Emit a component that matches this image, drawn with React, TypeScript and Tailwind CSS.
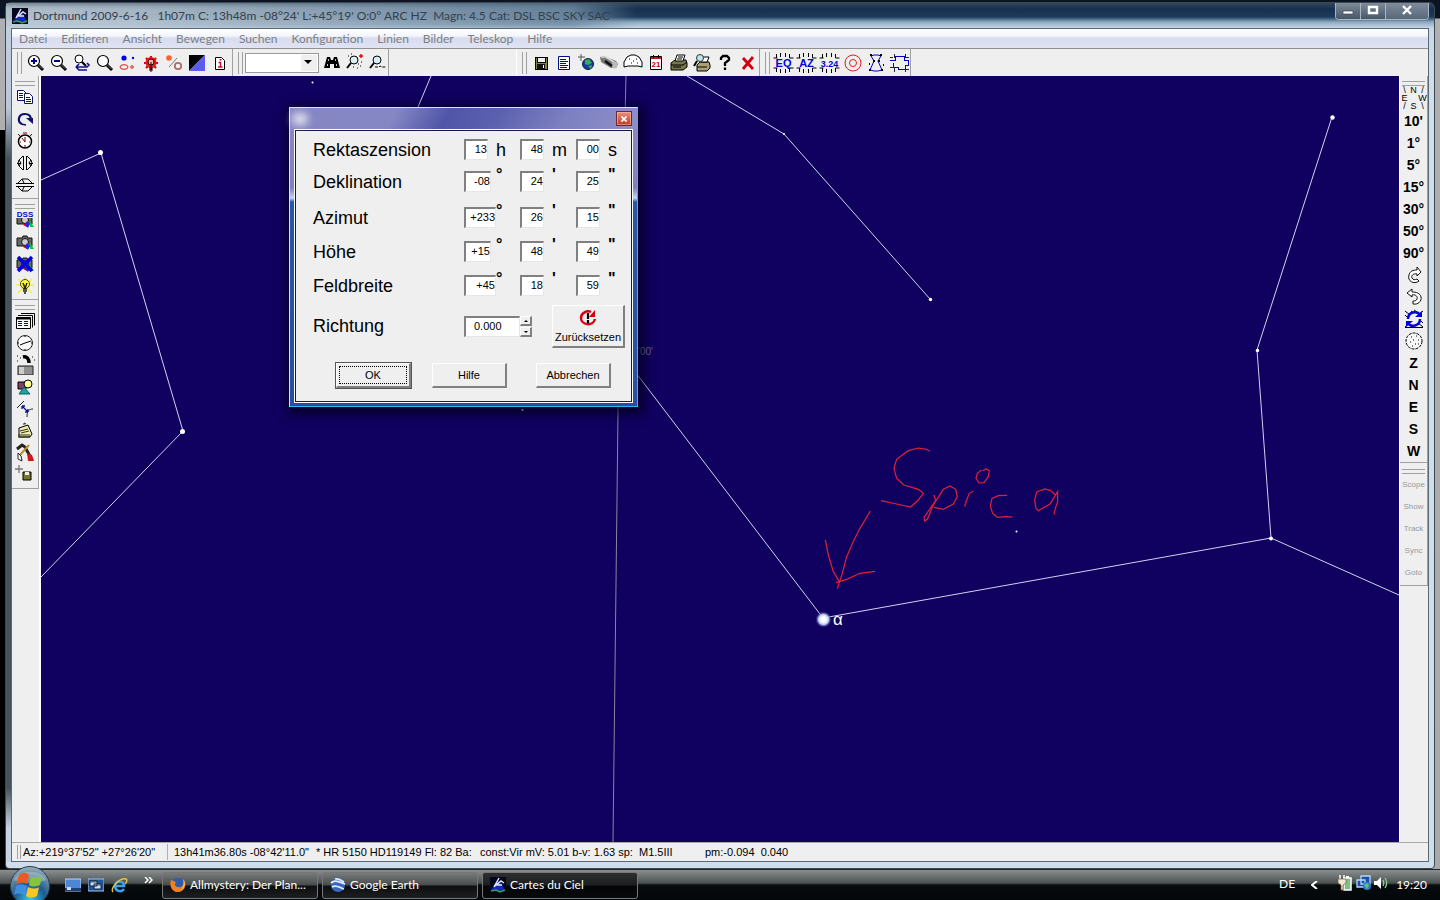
import type { ReactNode } from "react";

const ink = { fill: "none", stroke: "#000", strokeWidth: 1 } as const;

function Icon({ children, crisp = false }: { children: ReactNode; crisp?: boolean }) {
  return (
    <svg width="20" height="20" viewBox="0 0 20 20" className="shrink-0" shapeRendering={crisp ? "crispEdges" : undefined} aria-hidden="true">
      {children}
    </svg>
  );
}

function Lens({ sign }: { sign?: "plus" | "minus" }) {
  return (
    <Icon>
      <circle cx="8" cy="8" r="5.5" fill="#fff" stroke="#000" strokeWidth="1.2" />
      {sign && <path d="M5 8h6" stroke="#00008b" strokeWidth="2" />}
      {sign === "plus" && <path d="M8 5v6" stroke="#00008b" strokeWidth="2" />}
      <path d="M12 12l5 5" stroke="#000" strokeWidth="3" />
      <path d="M12.5 12l4 4" stroke="#888" strokeWidth="0.8" />
    </Icon>
  );
}

function CameraBase() {
  return (
    <>
      <path d="M2 6h5l1-2h4l1 2h4v8H2z" fill="#666" stroke="#111" />
      <circle cx="10" cy="10" r="3.5" fill="#ccc" stroke="#111" />
      <path d="M8 15l4-3v5z" fill="#d00" />
      <path d="M12 11l3 3-2 4-3-3z" fill="#22f" />
      <path d="M15 11l4 6h-4z" fill="#0c3" />
    </>
  );
}

function FrameTicks() {
  return (
    <path
      d="M3 5v-4M7 4v-4M12 4v-4M16 5v-4M3 15v4M7 16v4M12 16v4M16 15v4M0 5h4M16 5h4M0 15h4M16 15h4"
      stroke="#000"
      fill="none"
    />
  );
}

function TextBadge({ text, size }: { text: string; size: number }) {
  return (
    <svg width="21" height="20" viewBox="0 0 20 20" className="shrink-0">
      <FrameTicks />
      <text x="10" y="14" textAnchor="middle" fontSize={size} fontWeight="bold" fontFamily="Liberation Sans, sans-serif" fill="#0000d8">
        {text}
      </text>
    </svg>
  );
}

const viewTools: [string, ReactNode][] = [
  ["Vergrößern", <Lens sign="plus" />],
  ["Verkleinern", <Lens sign="minus" />],
  ["Vorherige Ansicht", (
    <Icon>
      <circle cx="7" cy="6" r="4" fill="#fff" stroke="#000" />
      <path d="M10 9l4 4" stroke="#000" strokeWidth="2.2" />
      <path d="M4 14h11l2-2-2-2M4 14l3-3M4 14l3 3h8" fill="none" stroke="#10108c" strokeWidth="1.6" />
    </Icon>
  )],
  ["Lupe", <Lens />],
  ["Sterne", (
    <Icon>
      <circle cx="6" cy="5" r="2.6" fill="#0000e0" />
      <circle cx="15" cy="5" r="1.2" fill="#0000e0" />
      <ellipse cx="6" cy="14" rx="4" ry="2.3" fill="none" stroke="#d22" />
      <circle cx="14" cy="14" r="1.3" fill="none" stroke="#d22" />
    </Icon>
  )],
  ["Nebel", (
    <Icon>
      <path d="M10 3v14M3 10h14M5 5l10 10M15 5L5 15" stroke="#d00" strokeWidth="2.2" />
      <circle cx="10" cy="9.5" r="5.5" fill="#e02020" />
      <circle cx="10" cy="9" r="3" fill="#f6b0a0" stroke="#200" />
      <path d="M10 9v10M8 15h4M8 17h4" stroke="#200" />
    </Icon>
  )],
  ["Planeten", (
    <Icon>
      <circle cx="5" cy="5" r="2.8" fill="#ff6030" />
      <circle cx="14" cy="13" r="3.2" fill="none" stroke="#a86a6a" strokeWidth="1.7" />
      <path d="M5 14L13 5" stroke="#777" />
    </Icon>
  )],
  ["Himmelsfarbe", (
    <Icon>
      <path d="M2 2h16L2 18z" fill="#000" />
      <path d="M18 2v16H2z" fill="#5c5cf4" />
    </Icon>
  )],
  ["Information", (
    <Icon>
      <path d="M5.5 4.500h6l3 3v9h-9z" fill="#fff" stroke="#000" />
      <path d="M8.500 9.500h2v4.500M8 14h4.500" stroke="#c01030" strokeWidth="1.500" fill="none" />
      <path d="M9.500 6h2v1.500h-2z" fill="#c01030" />
    </Icon>
  )],
];

const searchTools: [string, ReactNode][] = [
  ["Suchen", (
    <Icon>
      <path d="M5 4h3l1 3h2l1-3h3l3 11h-6v-4H8v4H2z" fill="#000" />
      <path d="M5 12h1M14 12h1M6 7h1M13 7h1" stroke="#fff" strokeWidth="1.5" />
    </Icon>
  )],
  ["Objekt suchen", (
    <Icon>
      <circle cx="9" cy="7" r="4" fill="#d8f0f4" stroke="#000" />
      <path d="M6 10l-4 5" stroke="#000" strokeWidth="2" />
      <path d="M14 3h4M16 1v4" stroke="#e00" strokeWidth="1.4" />
      <path d="M3 3h1M6 1h1M13 11h1M12 15h1M16 9h1M8 14h1M15 13h1" stroke="#000" />
    </Icon>
  )],
  ["Details", (
    <Icon>
      <circle cx="9" cy="7" r="4" fill="#d8f0f4" stroke="#000" />
      <path d="M6 10l-4 5" stroke="#000" strokeWidth="2" />
      <path d="M7 14h4l1-1 2 1h4" stroke="#000" fill="none" strokeDasharray="3 1" />
    </Icon>
  )],
];

const fileTools: [string, ReactNode][] = [
  ["Speichern", (
    <Icon crisp>
      <path d="M4 4h12v12H4z" fill="#85853a" stroke="#000" />
      <path d="M6 4h8v5H6z" fill="#eee" stroke="#000" />
      <path d="M6 11h8v5H6z" fill="#111" />
      <path d="M12 12h1v3h-1z" fill="#fff" />
    </Icon>
  )],
  ["Objektliste", (
    <Icon>
      <path d="M4.500 3.500h11v13h-11z" fill="#fff" stroke="#00108c" />
      <path d="M6 6.500h6M6 8.500h8M6 10.500h6M6 12.500h8M6 14.500h7" stroke="#00108c" />
    </Icon>
  )],
  ["Beobachtungsort", (
    <Icon>
      <path d="M4 1v7M1 4h7" stroke="#555" />
      <circle cx="11" cy="11" r="5.5" fill="#173aa8" stroke="#123" />
      <path d="M8 7l4-1 3 4-4 2-3-1zM11 13l4-1-1 4z" fill="#35b050" />
    </Icon>
  )],
  ["Teleskop", (
    <Icon>
      <path d="M0 4l4-1 12 5 2 3-2 4-5 0-10-6z" fill="#777" />
      <path d="M1 4l5 0 8 5" stroke="#ddd" strokeWidth="1.6" fill="none" />
      <ellipse cx="14.500" cy="12" rx="3" ry="3.500" fill="#bbb" />
      <path d="M5 8l7 5" stroke="#111" strokeWidth="2.5" />
    </Icon>
  )],
  ["Horizont", (
    <Icon>
      <path d="M1 14V9l3-5 4-2h4l4 2 3 5v5l-4-1H5z" fill="#fff" stroke="#000" />
      <path d="M6 6h1M10 8h1M13 6h1M8 10h1M14 10h1" stroke="#000" />
    </Icon>
  )],
  ["Kalender", (
    <Icon>
      <path d="M4.500 3.500h11v13h-11z" fill="#fff" stroke="#000" />
      <path d="M5 4h10v2H5z" fill="#b02020" />
      <path d="M7.500 2v3M12.500 2v3" stroke="#000" />
      <text x="10" y="14" fontSize="8" fontWeight="bold" textAnchor="middle" fill="#c00" fontFamily="Liberation Sans, sans-serif">21</text>
    </Icon>
  )],
  ["Drucken", (
    <Icon>
      <path d="M2 10l4-3h11l1 3v4l-4 3H2z" fill="#777748" stroke="#000" />
      <path d="M6 8l2-6h8l-2 6z" fill="#fff" stroke="#000" />
      <path d="M9 4h5M8 6h5M2 12h12l4-3M4 14h8" stroke="#000" fill="none" />
    </Icon>
  )],
  ["Druckvorschau", (
    <Icon>
      <path d="M5 12l3-3h9l1 3v3l-3 3H5z" fill="#aaa275" stroke="#000" />
      <path d="M9 9l2-5h6l-2 5zM5 14h10" fill="#fff" stroke="#000" />
      <circle cx="8" cy="5" r="3.5" fill="#bfe4ee" stroke="#333" />
      <path d="M5 8l-3 5" stroke="#000" strokeWidth="2" />
    </Icon>
  )],
  ["Hilfe", (
    <Icon>
      <path d="M6 7V5l2-2h4l2 2v2l-4 3v3M10 14.500v2.500" stroke="#000" strokeWidth="2.300" fill="none" />
    </Icon>
  )],
  ["Beenden", (
    <Icon>
      <path d="M5 5l10 11M15 4L5 16" stroke="#d00010" strokeWidth="2.800" />
    </Icon>
  )],
];

const gridTools: [string, ReactNode][] = [
  ["Äquatorgitter", <TextBadge text="EQ" size={11} />],
  ["Azimutgitter", <TextBadge text="AZ" size={11} />],
  ["Gitterwerte", <TextBadge text="3.24" size={9} />],
  ["Telrad", (
    <Icon>
      <circle cx="10" cy="10" r="8" fill="none" stroke="#e02020" />
      <circle cx="10" cy="10" r="3.500" fill="none" stroke="#e02020" />
    </Icon>
  )],
  ["Sternbilder", (
    <Icon>
      <path d="M5 3l3-1 4 0 3 1-3 5 4 9-4 1H8l-4-1 4-9z" fill="none" stroke="#0000c8" />
      <path d="M4 2h2M14 2h2M7 8h2M12 8h2M3 17h2M15 17h2M3 11h1M17 12h1" stroke="#000" strokeWidth="2" />
    </Icon>
  )],
  ["Sternbildgrenzen", (
    <Icon crisp>
      <path d="M1 7h5V3h9v4h4v5h-3v4H9v-2H4v-4" fill="none" stroke="#0000c8" />
      <path d="M1 4h3M5 1v4M16 1v3M16 4h4M1 14h4M5 14v5M16 16v3M16 16h4" stroke="#223" />
    </Icon>
  )],
];

const leftTools: [string, ReactNode][][] = [
  [
    ["Kopieren", (
      <Icon>
        <path d="M2.500 3.500h6l3 3v7h-9z" fill="#fff" stroke="#10106a" />
        <path d="M9.500 6.500h5l3 3v7h-8z" fill="#fff" stroke="#10106a" />
        <path d="M4 6.500h4M4 8.500h4M4 10.500h4M11 10.500h4M11 12.500h5M11 14.500h5" stroke="#10106a" />
      </Icon>
    )],
    ["Aktualisieren", (
      <Icon>
        <path d="M7 15c-5-2-4-10 3-10 4 0 6 2 6 6" fill="none" stroke="#10106a" strokeWidth="2.200" />
        <path d="M11 9h7v6z" fill="#10106a" />
        <path d="M6 15l5 1" stroke="#10106a" strokeWidth="1.500" />
      </Icon>
    )],
    ["Zeit", (
      <Icon>
        <circle cx="10" cy="10.500" r="6.500" fill="#fff" stroke="#000" strokeWidth="1.500" />
        <path d="M8 2h4M3 3l2 2M17 3l-2 2M10 11V6M10 11L7 7M10 14v2M5 11h1M14 11h1" stroke="#700" />
      </Icon>
    )],
    ["Horizontal spiegeln", (
      <Icon>
        <path d="M8.500 3v14M11.500 3v14M8 3L4 7l2 3-2 3 4 4M12 3l4 4-2 3 2 3-4 4M2 10.500h4M14 10.500h4M4 7l-1 3M4 13l-1-3M16 7l1 3M16 13l1-3" {...ink} />
      </Icon>
    )],
    ["Vertikal spiegeln", (
      <Icon>
        <path d="M3 8.500h14M3 11.500h14M3 8l4-4h6l4 4M3 12l4 4h6l4-4M7 4l2 4M7 16l2-4M1 8.500h2M17 8.500h2M1 11.500h2M17 11.500h2" {...ink} />
      </Icon>
    )],
  ],
  [
    ["DSS-Bild", (
      <Icon>
        <CameraBase />
        <rect x="0" y="0" width="20" height="8" fill="#efefef" />
        <text x="10" y="7" fontSize="8" fontWeight="bold" textAnchor="middle" fill="#0010c0" fontFamily="Liberation Sans, sans-serif">DSS</text>
      </Icon>
    )],
    ["Bild anzeigen", <Icon><CameraBase /></Icon>],
    ["Bild ausblenden", (
      <Icon>
        <CameraBase />
        <path d="M3 3l14 14M17 3L3 17" stroke="#0000e0" strokeWidth="3.500" />
      </Icon>
    )],
    ["Nachtsicht", (
      <Icon>
        <path d="M3 3l14 14M17 3L3 17M1 9h18M10 1v10" stroke="#f6ee40" strokeWidth="1.500" />
        <circle cx="10" cy="8" r="4.500" fill="#ffff30" stroke="#443" />
        <path d="M8 7l2 5 2-5M8 13h4M8 15h4M9 17h2" stroke="#221" fill="none" strokeWidth="1.500" />
      </Icon>
    )],
  ],
  [
    ["Karten", (
      <Icon>
        <path d="M6 2.500h13.500v12M3 4.500h14.500v12" fill="none" stroke="#000" />
        <path d="M1.500 6.500h14v11h-14z" fill="#fff" stroke="#000" />
        <path d="M1 7.500h14" stroke="#000" strokeWidth="2" />
        <path d="M3 10.500h4M3 12.500h4M3 14.500h4M9 10.500h4M9 12.500h4M9 14.500h4" stroke="#10108c" />
      </Icon>
    )],
    ["Uhr", (
      <Icon>
        <circle cx="10" cy="10" r="7.500" fill="#fafafa" stroke="#222" />
        <path d="M16 8l-6 2-5 2M10 3v1M10 16v1M3 10h1M16 10h1" {...ink} />
      </Icon>
    )],
    ["Animation", (
      <Icon>
        <path d="M3 11h15v9H3z" fill="#909090" stroke="#222" />
        <path d="M4 12h5v7H4z" fill="#ccc" />
        <path d="M8 2c4-1 6 2 6 6" stroke="#000" strokeWidth="3.500" fill="none" />
        <path d="M2 1h1M5 3h1M17 2h1M19 5h1M2 6h1" stroke="#000" />
      </Icon>
    )],
    ["Symbole", (
      <Icon>
        <path d="M3 5h8v7H3z" fill="#80406a" stroke="#000" />
        <circle cx="13" cy="7" r="4" fill="#ffff90" stroke="#000" />
        <path d="M9 10l6 7H4z" fill="#25a0a0" stroke="#066" />
      </Icon>
    )],
    ["Entfernung", (
      <Icon>
        <path d="M2 9l7-7M12 18c0-6 2-8 6-8" stroke="#222" fill="none" />
        <path d="M7 7l6 6M7 7h3M7 7v3M13 13h-3M13 13v-3" stroke="#10108c" strokeWidth="1.300" />
      </Icon>
    )],
    ["Notizen", (
      <Icon>
        <path d="M4 7l9-3 4 9-2 3H4z" fill="#eeeeb8" stroke="#000" />
        <path d="M3 14h12M5 10l8-2M6 12l8-2M9 4V2l2 1M3 16h12" stroke="#331" fill="none" />
      </Icon>
    )],
    ["Werkzeuge", (
      <Icon>
        <path d="M2 6l5-4 3 2 7 13" fill="none" stroke="#222" strokeWidth="3" />
        <path d="M14 2L5 12" stroke="#b89030" strokeWidth="2" />
        <path d="M3 10l3 3 1 5-4-2z" fill="#fff" stroke="#222" />
        <path d="M12 10l5 2 2 6h-6z" fill="#d01818" />
      </Icon>
    )],
    ["Ansicht sichern", (
      <Icon>
        <path d="M4 0v8M0 4h8" stroke="#777" strokeWidth="1.300" />
        <path d="M8 7h8v8H8z" fill="#77772c" stroke="#000" />
        <path d="M10 7h4v3h-4z" fill="#eee" />
      </Icon>
    )],
  ],
];

const turnRight = (
  <Icon>
    <path d="M13 2l4 5-4 4V9c-4-1-6 2-5 4 1 2 3 2 5 1l2 2c-5 4-12 0-10-6 1-4 4-5 8-5z" fill="#fff" stroke="#111" />
  </Icon>
);
const turnLeft = (
  <Icon>
    <path d="M8 2L3 6l5 4V8c4-1 6 2 5 4-1 2-2 2-4 2v3c5 1 9-3 8-7-1-4-5-5-9-5z" fill="#fff" stroke="#111" />
  </Icon>
);
const turnView = (
  <Icon>
    <path d="M1 2l5 4M19 2l-5 4M1 18l5-4M19 18l-5-4M1 6l3 3M19 14l-3-3M1 18.500h18M7 2l3 2M10 1l3 2" stroke="#001" />
    <path d="M4 10c0-7 9-9 12-4M16 10c0 7-9 9-12 4" fill="none" stroke="#0000e0" strokeWidth="2.500" />
    <path d="M11 8h7V2zM9 12H2v6z" fill="#0000e0" />
  </Icon>
);
const wholeSky = (
  <Icon>
    <circle cx="10" cy="10" r="8" fill="#f8f8f8" stroke="#000" strokeDasharray="3 1" />
    <path d="M7 6h1M12 5h1M9 9h1M14 9h1M6 11h1M11 13h1M8 15h1M14 13h1" stroke="#000" />
  </Icon>
);

const fieldTools: [string, ReactNode][] = [
  ["10 Minuten", "10'"], ["1 Grad", "1°"], ["5 Grad", "5°"], ["15 Grad", "15°"], ["30 Grad", "30°"], ["50 Grad", "50°"], ["90 Grad", "90°"],
  ["Rechts drehen", turnRight], ["Links drehen", turnLeft], ["Ansicht drehen", turnView], ["Ganzer Himmel", wholeSky],
  ["Zenit", "Z"], ["Norden", "N"], ["Osten", "E"], ["Süden", "S"], ["Westen", "W"],
];

function Grip() {
  return <span className="mr-[2px] ml-[5px] h-[22px] w-[5px] shrink-0 border-x border-[#a0a0a0]" />;
}

function HGrip() {
  return <span className="mx-[2px] mt-[5px] h-[5px] shrink-0 border-y border-[#a0a0a0]" />;
}

function Tools({ items }: { items: [string, ReactNode][] }) {
  return (
    <>
      {items.map(([name, icon]) => (
        <button key={name} type="button" aria-label={name} className="flex h-[22px] w-[23px] shrink-0 items-center justify-center">
          {icon}
        </button>
      ))}
    </>
  );
}

function Atlas() {
  return (
    <svg width="16" height="16" viewBox="0 0 16 16" className="shrink-0" aria-hidden="true">
      <rect width="16" height="16" fill="#05061c" />
      <path d="M1 13l4-5 3-4 4 3 3 7-5 1z" fill="#1528b8" />
      <path d="M4 10L9 1M5 9l6-5 3 2M7 8l5 0" stroke="#dfe6ff" strokeWidth="1.500" fill="none" />
      <path d="M1 14l5-1 4 2 5-2" stroke="#35a052" strokeWidth="1.500" fill="none" />
    </svg>
  );
}

const menu = ["Datei", "Editieren", "Ansicht", "Bewegen", "Suchen", "Konfiguration", "Linien", "Bilder", "Teleskop", "Hilfe"];

function Sky() {
  return (
    <svg className="absolute inset-0 h-full w-full" viewBox="41 76 1358 766" preserveAspectRatio="none" role="img" aria-label="Sternkarte mit Spica">
      <defs>
        <radialGradient id="glow">
          <stop offset="0.300" stopColor="#fff" />
          <stop offset="0.600" stopColor="#b9cdf5" />
          <stop offset="1" stopColor="#100060" stopOpacity="0" />
        </radialGradient>
      </defs>
      <g fill="none" stroke="#d4d0ee" strokeWidth="1">
        <path d="M41 180L101 153L183 431L41 577" />
        <path d="M431 76L400 150" />
        <path d="M687 76L784 134L930 299" />
        <path d="M1332 117L1257 350L1271 538L1399 595" />
        <path d="M1271 538L823 618L620 352" />
      </g>
      <path d="M626 76L618 412L613 842" fill="none" stroke="#8a86a0" />
      <g fill="#fff">
        <circle cx="100.500" cy="152.500" r="2.500" />
        <circle cx="182.500" cy="431.500" r="2.500" />
        <circle cx="1332.500" cy="117.500" r="2.200" />
        <circle cx="1257.500" cy="350.500" r="1.800" />
        <circle cx="1271" cy="538.500" r="2" />
        <circle cx="930.500" cy="299.500" r="1.700" />
        <circle cx="784" cy="134" r="1" />
        <circle cx="312.500" cy="82.500" r="1" />
        <circle cx="522.500" cy="410" r="1" />
        <circle cx="1016.500" cy="531.500" r="1" />
      </g>
      <circle cx="823.500" cy="619.500" r="8.500" fill="url(#glow)" />
      <text x="638" y="355" fontSize="10" fill="#6c688c" fontFamily="Liberation Sans, sans-serif">'00'</text>
      <text x="833" y="625" fontSize="17" fill="#fff" fontFamily="Liberation Sans, sans-serif">α</text>
      <g transform="translate(780 430) scale(0.3333)" fill="none" stroke="#e0203c" strokeWidth="3.600">
        <polyline points="449,64 440,58 415,54 385,62 350,88 342,115 350,145 372,165 415,178 430,190 415,210 392,231 350,222 303,212" />
        <polyline points="462,195 467,212 432,262 434,273 442,268 460,225 490,178 510,168 527,178 532,200 520,222 490,238 462,232" />
        <polyline points="580,184 568,190 560,210 554,230" />
        <polyline points="605,120 592,130 588,145 597,159 612,158 625,140 628,122 618,117 608,122" />
        <polyline points="681,196 655,197 636,205 631,228 638,250 652,262 680,260 698,261" />
        <polyline points="826,195 812,182 795,177 770,186 764,210 768,235 775,242 810,222 833,185 833,215 826,235 822,254" />
        <polyline points="271,243 240,295 222,330 200,380 187,430 172,476" />
        <polyline points="136,330 145,375 160,425 178,455" />
        <polyline points="168,458 200,448 240,430 285,424" />
      </g>
    </svg>
  );
}

const sunken = "border-t-2 border-l-2 border-r border-b border-t-[#808080] border-l-[#808080] border-r-[#e6e6e6] border-b-[#e6e6e6] bg-white";
const raised = "border-t border-l border-r-2 border-b-2 border-t-white border-l-white border-r-[#808080] border-b-[#808080] bg-[#efefef]";

type Coord = { label: string; wide: string; values: [string, string, string]; time?: boolean };
const equatorial: Coord[] = [
  { label: "Rektaszension", wide: "w-6", values: ["13", "48", "00"], time: true },
  { label: "Deklination", wide: "w-[27px]", values: ["-08", "24", "25"] },
];
const horizontal: Coord[] = [
  { label: "Azimut", wide: "w-8", values: ["+233", "26", "15"] },
  { label: "Höhe", wide: "w-[27px]", values: ["+15", "48", "49"] },
  { label: "Feldbreite", wide: "w-8", values: ["+45", "18", "59"] },
];

function CoordRow({ label, wide, values, time }: Coord) {
  const units = time ? ["h", "m", "s"] : ["°", "'", "\""];
  return (
    <div className="grid h-[21px] grid-cols-[151px_56px_56px_56px]">
      <label htmlFor={label + "0"} className="text-[18px] leading-[23px]">{label}</label>
      {values.map((value, i) => (
        <div key={i} className="grid grid-cols-[32px_1fr]">
          <input
            id={label + i}
            aria-label={label + " " + units[i]}
            defaultValue={value}
            className={`h-[21px] ${i === 0 ? wide : "w-6"} ${sunken} pb-[2px] text-right text-[11px] leading-4 outline-none`}
          />
          <span className={time ? "text-[18px] leading-[23px]" : "text-[16px] leading-2 font-bold"}>{units[i]}</span>
        </div>
      ))}
    </div>
  );
}

function Dialog() {
  return (
    <form
      role="dialog"
      aria-label="Position"
      onSubmit={(e) => e.preventDefault()}
      className="absolute top-[31px] left-[248px] w-[349px] border border-[#d8e4f8] border-r-[#30b8e8] border-b-[#30b8e8] bg-[linear-gradient(180deg,#8a8ac4_0px,#7f80c0_80px,#c4d4f4_90px,#2458a8_94px,#2450a4_100%)] px-1 pb-[3px] font-['Liberation_Sans',Arial,sans-serif] text-black shadow-[2px_3px_10px_4px_rgba(0,0,20,0.7)]"
    >
      <div className="-mx-1 flex h-[21px] items-center justify-end bg-[linear-gradient(120deg,#8586c2_0%,#8587c4_30%,#5055a8_45%,#5a5fae_58%,#7c80c0_78%,#8e90c8_100%)] pr-[5px]">
        <span className="mr-auto ml-[2px] h-3 w-4 rounded-full bg-white/80 blur-[4px]" />
        <button type="button" aria-label="Schließen" className="flex h-[15px] w-4 items-center justify-center border border-[#702828] bg-linear-to-b from-[#e89080] to-[#c03820] shadow-[inset_0_0_0_1px_rgba(255,200,180,0.5)]">
          <svg width="6" height="6" viewBox="0 0 6 6"><path d="M0.500 0.500l5 5M5.500 0.500l-5 5" stroke="#fff" strokeWidth="1.600" /></svg>
        </button>
      </div>
      <div className="border border-white">
        <div className="border border-[#181840] bg-[#efefef] pt-2 pb-[13px] pl-[17px]">
          <div className="flex flex-col gap-[11px]">
            {equatorial.map((row) => <CoordRow key={row.label} {...row} />)}
          </div>
          <div className="mt-[15px] flex flex-col gap-[13px]">
            {horizontal.map((row) => <CoordRow key={row.label} {...row} />)}
          </div>
          <div className="mt-[9px] grid h-[43px] grid-cols-[151px_88px_73px] items-center">
            <label htmlFor="richtung" className="text-[18px] leading-[23px]">Richtung</label>
            <div className="flex items-center">
              <input id="richtung" defaultValue="0.000" className={`h-[21px] w-14 ${sunken} pb-[2px] pl-2 text-[11px] outline-none`} />
              <span className="flex flex-col gap-px">
                <button type="button" aria-label="Erhöhen" className={`flex h-[10px] w-3 items-center justify-center ${raised}`}>
                  <svg width="4" height="2" viewBox="0 0 4 2"><path d="M0 2l2-2 2 2z" /></svg>
                </button>
                <button type="button" aria-label="Verringern" className={`flex h-[10px] w-3 items-center justify-center ${raised}`}>
                  <svg width="4" height="2" viewBox="0 0 4 2"><path d="M0 0l2 2 2-2z" /></svg>
                </button>
              </span>
            </div>
            <button type="button" className={`flex h-[43px] w-[73px] flex-col items-center justify-center gap-[3px] text-[11px] leading-[14px] whitespace-nowrap ${raised}`}>
              <svg width="18" height="18" viewBox="0 0 18 18" className="shrink-0" aria-hidden="true">
                <path d="M12 3C8 1 2 4 2 9c0 7 12 9 14 1" fill="none" stroke="#d80010" strokeWidth="2.400" />
                <path d="M16 1v7H10z" fill="#d80010" />
                <path d="M9 4v6M9 11v3" stroke="#000" strokeWidth="2.200" />
              </svg>
              Zurücksetzen
            </button>
          </div>
          <div className="mt-[15px] flex pl-[23px] text-[11px]">
            <button type="submit" className={`h-[25px] w-[75px] p-[2px] outline outline-[#555] ${raised}`}>
              <span className="flex h-full items-center justify-center border border-dotted border-black">OK</span>
            </button>
            <button type="button" className={`ml-[21px] h-[25px] w-[75px] ${raised}`}>Hilfe</button>
            <button type="button" className={`ml-[29px] h-[25px] w-[75px] ${raised}`}>Abbrechen</button>
          </div>
        </div>
      </div>
    </form>
  );
}

function TitleBar() {
  return (
    <header className="relative flex h-[25px] shrink-0 items-center overflow-hidden pr-[5px] pl-[6px]">
      <span className="absolute inset-y-0 left-[-20px] w-[650px] bg-[linear-gradient(90deg,#c3ced8_0%,#b8c6d2_20%,#8fa5b8_60%,#6f8aa2_90%,transparent_100%)] opacity-90 blur-[3px]" />
      <span className="relative flex items-center gap-[5px]">
        <Atlas />
        <h1 className="text-[12px] whitespace-pre text-[#34414e]">Dortmund 2009-6-16   1h07m C: 13h48m -08°24' L:+45°19' O:0° ARC HZ  Magn: 4.5 Cat: DSL BSC SKY SAC</h1>
      </span>
      <span className="relative ml-auto flex h-[17px] self-start overflow-hidden rounded-b border border-t-0 border-[#a9b5c0]">
        <button type="button" aria-label="Minimieren" className="flex w-[25px] items-center justify-center border-r border-[#a9b5c0] bg-linear-to-b from-[#7e8c9a] to-[#475768]">
          <svg width="12" height="12" viewBox="0 0 12 12"><path d="M1 6h10v3H1z" fill="#fff" stroke="#445" strokeWidth="0.700" /></svg>
        </button>
        <button type="button" aria-label="Maximieren" className="flex w-[25px] items-center justify-center border-r border-[#a9b5c0] bg-linear-to-b from-[#7e8c9a] to-[#475768]">
          <svg width="12" height="12" viewBox="0 0 12 12"><path d="M2 2h8v6H2z" fill="none" stroke="#fff" strokeWidth="2.400" /></svg>
        </button>
        <button type="button" aria-label="Fenster schließen" className="flex w-[42px] items-center justify-center bg-linear-to-b from-[#7e8c9a] to-[#56687a]">
          <svg width="12" height="12" viewBox="0 0 12 12"><path d="M2 1l8 8M10 1l-8 8" stroke="#fff" strokeWidth="2.400" /></svg>
        </button>
      </span>
    </header>
  );
}

const band = "flex shrink-0 items-center border-r border-[#a0a0a0]";

function ToolBar() {
  return (
    <div className="flex h-7 shrink-0 border-t border-[#909090] bg-[#efefef]">
      <div className={`${band} w-[221px]`}>
        <Grip />
        <Tools items={viewTools} />
      </div>
      <div className={`${band} w-[156px]`}>
        <Grip />
        <select aria-label="Objekt" className="h-5 w-[74px] shrink-0 appearance-none border border-[#999] bg-white bg-[linear-gradient(#efefef,#efefef)] bg-[length:16px_16px] bg-[position:right_1px_center] bg-no-repeat">
          <option></option>
        </select>
        <svg width="10" height="5" viewBox="0 0 10 5" className="pointer-events-none mr-[6px] -ml-[15px] shrink-0" aria-hidden="true"><path d="M0 0h8L4 4z" /></svg>
        <Tools items={searchTools} />
      </div>
      <div className={`${band} ml-[127px] w-[244px] border-l border-l-white`}>
        <Grip />
        <Tools items={fileTools} />
      </div>
      <div className={`${band} w-[151px]`}>
        <Grip />
        <Tools items={gridTools} />
      </div>
    </div>
  );
}

function LeftBar() {
  return (
    <aside className="flex w-[29px] shrink-0 flex-col border-r-2 border-white bg-[#efefef]">
      {leftTools.map((group, i) => (
        <div key={i} className="flex flex-col border-r border-b border-[#a0a0a0] px-px pb-[2px]">
          <HGrip />
          {group.map(([name, icon]) => (
            <button key={name} type="button" aria-label={name} className="flex h-[22px] w-full items-center justify-center">{icon}</button>
          ))}
        </div>
      ))}
    </aside>
  );
}

function RightBar() {
  return (
    <aside className="flex w-[29px] shrink-0 flex-col border-l border-white bg-[#efefef] font-['Liberation_Sans',Arial,sans-serif]">
      <div className="flex flex-col border-r border-b border-[#a0a0a0]">
        <HGrip />
        <div className="grid h-6 grid-cols-3 text-center text-[9px] leading-2 text-black">
          <span>\</span><span>N</span><span>/</span>
          <span>E</span><span></span><span>W</span>
          <span>/</span><span>S</span><span>\</span>
        </div>
        {fieldTools.map(([name, face]) => (
          <button key={name} type="button" aria-label={name} className="flex h-[22px] items-center justify-center text-[14px] font-bold text-black">{face}</button>
        ))}
      </div>
      <div className="flex flex-col border-r border-b border-[#a0a0a0] pt-px pb-px">
        <HGrip />
        {["Scope", "Show", "Track", "Sync", "Goto"].map((name) => (
          <button key={name} type="button" className="h-[22px] text-[8px] text-[#999]">{name}</button>
        ))}
      </div>
    </aside>
  );
}

function StatusBar() {
  return (
    <footer className="flex h-[19px] shrink-0 items-center border-t border-[#a8a8a8] bg-[#efefef] font-['Liberation_Sans',Arial,sans-serif] text-[11px] whitespace-pre text-black">
      <span className="mr-[2px] ml-[5px] h-[14px] w-1 border-x border-[#a0a0a0]" />
      <span className="w-[145px] border-r border-[#b0b0b0]">Az:+219°37'52" +27°26'20"</span>
      <span className="w-[148px] pl-[6px]">13h41m36.80s -08°42'11.0"</span>
      <span className="w-[164px]">* HR 5150 HD119149 Fl: 82 Ba:</span>
      <span className="w-[225px]">const:Vir mV: 5.01 b-v: 1.63 sp:  M1.5III</span>
      <span>pm:-0.094  0.040</span>
    </footer>
  );
}

const firefox = (
  <svg width="16" height="16" viewBox="0 0 16 16" className="shrink-0">
    <circle cx="8" cy="8" r="7" fill="#2b5cb0" />
    <path d="M1 3c-2 6 1 12 7 12 7 0 9-8 6-12 0 6-3 8-6 7-3 0-4-3-2-5C4 4 3 4 1 3z" fill="#f08020" />
    <path d="M13 2c3 4 2 9-2 11 3-3 3-7 2-11z" fill="#ffd040" />
  </svg>
);
const earth = (
  <svg width="16" height="16" viewBox="0 0 16 16" className="shrink-0">
    <circle cx="8" cy="8" r="7" fill="#3a66c0" />
    <path d="M1 6c4-4 8-1 14 1M2 10c4-3 8 1 12 2M5 2c3-1 6 1 9 3" stroke="#e4edff" strokeWidth="1.800" fill="none" />
  </svg>
);

function TaskBar() {
  const tasks: [string, ReactNode, boolean][] = [
    ["Allmystery: Der Plan...", firefox, false],
    ["Google Earth", earth, false],
    ["Cartes du Ciel", <Atlas />, true],
  ];
  return (
    <nav className="relative flex h-[31px] shrink-0 items-center border-t border-[#222] bg-[linear-gradient(180deg,#8a8f90_0px,#4c5152_13px,#080b0e_15px,#04070a_100%)] text-[12px] text-white">
      <button type="button" aria-label="Start" className="relative -mt-1 ml-[9px] h-[34px] w-[42px] shrink-0">
        <svg width="42" height="42" viewBox="0 0 42 42" className="absolute top-0 left-0">
          <defs>
            <radialGradient id="orb" cx="0.500" cy="0.850" r="0.800">
              <stop offset="0" stopColor="#38c8e8" />
              <stop offset="0.500" stopColor="#1c5a90" />
              <stop offset="1" stopColor="#90a8b4" />
            </radialGradient>
          </defs>
          <circle cx="21" cy="20" r="19.500" fill="url(#orb)" stroke="#254050" />
          <path d="M5 14C9 3 33 3 37 14 30 18 12 18 5 14z" fill="#fff" opacity="0.250" />
          <path d="M10 9c4-3 7-3 10 0l-2 9c-3-2-7-2-11 0z" fill="#ee5a24" />
          <path d="M22 10c3 2 7 2 11 0l-2 9c-4 2-8 2-11 0z" fill="#86c440" />
          <path d="M7 20c4-2 7-2 11 0l-2 9c-4-2-8-2-11 0z" fill="#3f8ee0" />
          <path d="M19 21c4 2 8 2 11 0l-2 9c-4 2-8 2-11 0z" fill="#fcc624" />
        </svg>
      </button>
      <button type="button" aria-label="Desktop anzeigen" className="ml-[14px]">
        <svg width="16" height="14" viewBox="0 0 16 14"><path d="M0 1h16v12H0z" fill="#4d86d4" stroke="#bcd6f4" /><path d="M0 10h16v3H0z" fill="#1e3f78" /><path d="M2 9h4v3H2z" fill="#cde" /></svg>
      </button>
      <button type="button" aria-label="Fenster wechseln" className="ml-[7px]">
        <svg width="16" height="14" viewBox="0 0 16 14"><path d="M0 1h16v12H0z" fill="#1e55a0" stroke="#9cc4f0" /><path d="M2 3h7v5H2zM6 6h7v5H6z" fill="#cfe2fa" stroke="#123" /><path d="M2 4h7M6 7h7" stroke="#456" /></svg>
      </button>
      <button type="button" aria-label="Internet Explorer" className="ml-[7px]">
        <svg width="17" height="17" viewBox="0 0 17 17"><path d="M13 12c-3 4-9 2-9-3 0-6 9-6 9 0H4" fill="none" stroke="#3ba2ee" strokeWidth="2.600" /><path d="M2 15C-1 11 9 0 15 2c2 1 0 4-1 5" fill="none" stroke="#f2c23c" strokeWidth="1.400" /></svg>
      </button>
      <button type="button" aria-label="Weitere Symbole" className="ml-4 h-5 w-[9px] self-start">
        <svg width="9" height="7" viewBox="0 0 9 7"><path d="M1 0l3 3-3 3M5 0l3 3-3 3" fill="none" stroke="#fff" strokeWidth="1.500" /></svg>
      </button>
      <div className="ml-[9px] flex gap-1">
        {tasks.map(([name, icon, active]) => (
          <button
            key={name}
            type="button"
            className={`flex h-[27px] w-[156px] items-center gap-1 rounded-[3px] border border-[#777] pl-[7px] whitespace-nowrap ${
              active
                ? "bg-[linear-gradient(180deg,#2c2e30_0%,#1c1e20_48%,#050607_52%,#08090a_100%)]"
                : "bg-[linear-gradient(180deg,#777b7c_0%,#484c4d_48%,#0c0e10_52%,#1c1e20_100%)]"
            }`}
          >
            {icon}
            {name}
          </button>
        ))}
      </div>
      <div className="ml-auto flex items-center pr-[13px]">
        <span className="mr-4 mb-[3px]">DE</span>
        <button type="button" aria-label="Ausgeblendete Symbole" className="mr-5">
          <svg width="7" height="8" viewBox="0 0 7 8"><path d="M6 0L1 4l5 4" fill="none" stroke="#fff" strokeWidth="2" /></svg>
        </button>
        <svg width="14" height="16" viewBox="0 0 14 16" className="mr-1 mb-1" aria-hidden="true">
          <path d="M6 3h7v12H6z" fill="#7cc088" stroke="#fff" strokeWidth="1.500" /><path d="M8 1h3v2H8z" fill="#fff" />
          <path d="M2 0v4M6 0v4" stroke="#fff" strokeWidth="1.500" /><path d="M0 4h8v4l-3 2v5H3v-5L0 8z" fill="#f0e8d0" stroke="#754" strokeWidth="0.700" />
        </svg>
        <svg width="15" height="16" viewBox="0 0 15 16" className="mr-[3px] mb-1" aria-hidden="true">
          <path d="M5 1h9v8H5zM1 5h8v7H1z" fill="#1850b0" stroke="#b8d8f4" strokeWidth="1.300" />
          <circle cx="11" cy="11" r="4" fill="#2f7ad0" /><path d="M8 10l3-2 2 2-2 4z" fill="#58c860" />
        </svg>
        <svg width="14" height="14" viewBox="0 0 14 14" className="mr-2 mb-1" aria-hidden="true">
          <path d="M0 5h3l4-4v12L3 9H0z" fill="#fff" /><path d="M9 4c1 2 1 4 0 6M11 2c2 3 2 7 0 10" fill="none" stroke="#8cd090" strokeWidth="1.300" />
        </svg>
        <time>19:20</time>
      </div>
    </nav>
  );
}

export default function App() {
  return (
    <div className="flex h-screen min-h-[700px] flex-col bg-[linear-gradient(180deg,#0b1424_0px,#0b1424_18px,#b0b0b2_19px,#a8a8aa_100%)] font-[Lato,'Open_Sans',sans-serif]">
      <div className="flex min-h-0 flex-1 bg-[linear-gradient(90deg,#000_0px,#000_12px,transparent_12px)] bg-[position:0_130px] bg-no-repeat px-[5px] pt-[2px]">
        <main className="flex min-w-0 flex-1 flex-col rounded-t-md rounded-b border border-[#40484f] bg-[linear-gradient(180deg,#33475c_0px,#16304f_6px,#1d3b5b_14px,#8fa9c0_19px,#c4d6e8_25px,#cfdeec_60px,#cfdeec_100%)] pb-[6px]">
          <TitleBar />
          <div className="flex min-h-0 flex-1 bg-[linear-gradient(180deg,#c0d0e0_0px,#b8c8d8_80px,#46535f_130px,#46535f_760px,#c4d4e2_800px)] bg-[length:5px_100%] bg-no-repeat px-[5px]">
            <div className="flex min-w-0 flex-1 flex-col border border-[#5c6874]">
              <ul className="flex h-[19px] shrink-0 items-center gap-[14px] bg-[linear-gradient(180deg,#fff_0%,#f4f6fb_35%,#d8dcee_50%,#dfe3f3_100%)] pl-[7px] text-[12px] text-[#7c7f85]">
                {menu.map((item) => (
                  <li key={item}><button type="button" className="block leading-[18px]">{item}</button></li>
                ))}
              </ul>
              <ToolBar />
              <div className="flex min-h-0 flex-1 bg-[#efefef]">
                <LeftBar />
                <section className="relative min-w-0 flex-1 overflow-hidden bg-[#100060]">
                  <Sky />
                  <Dialog />
                </section>
                <RightBar />
              </div>
              <StatusBar />
            </div>
          </div>
        </main>
      </div>
      <TaskBar />
    </div>
  );
}
